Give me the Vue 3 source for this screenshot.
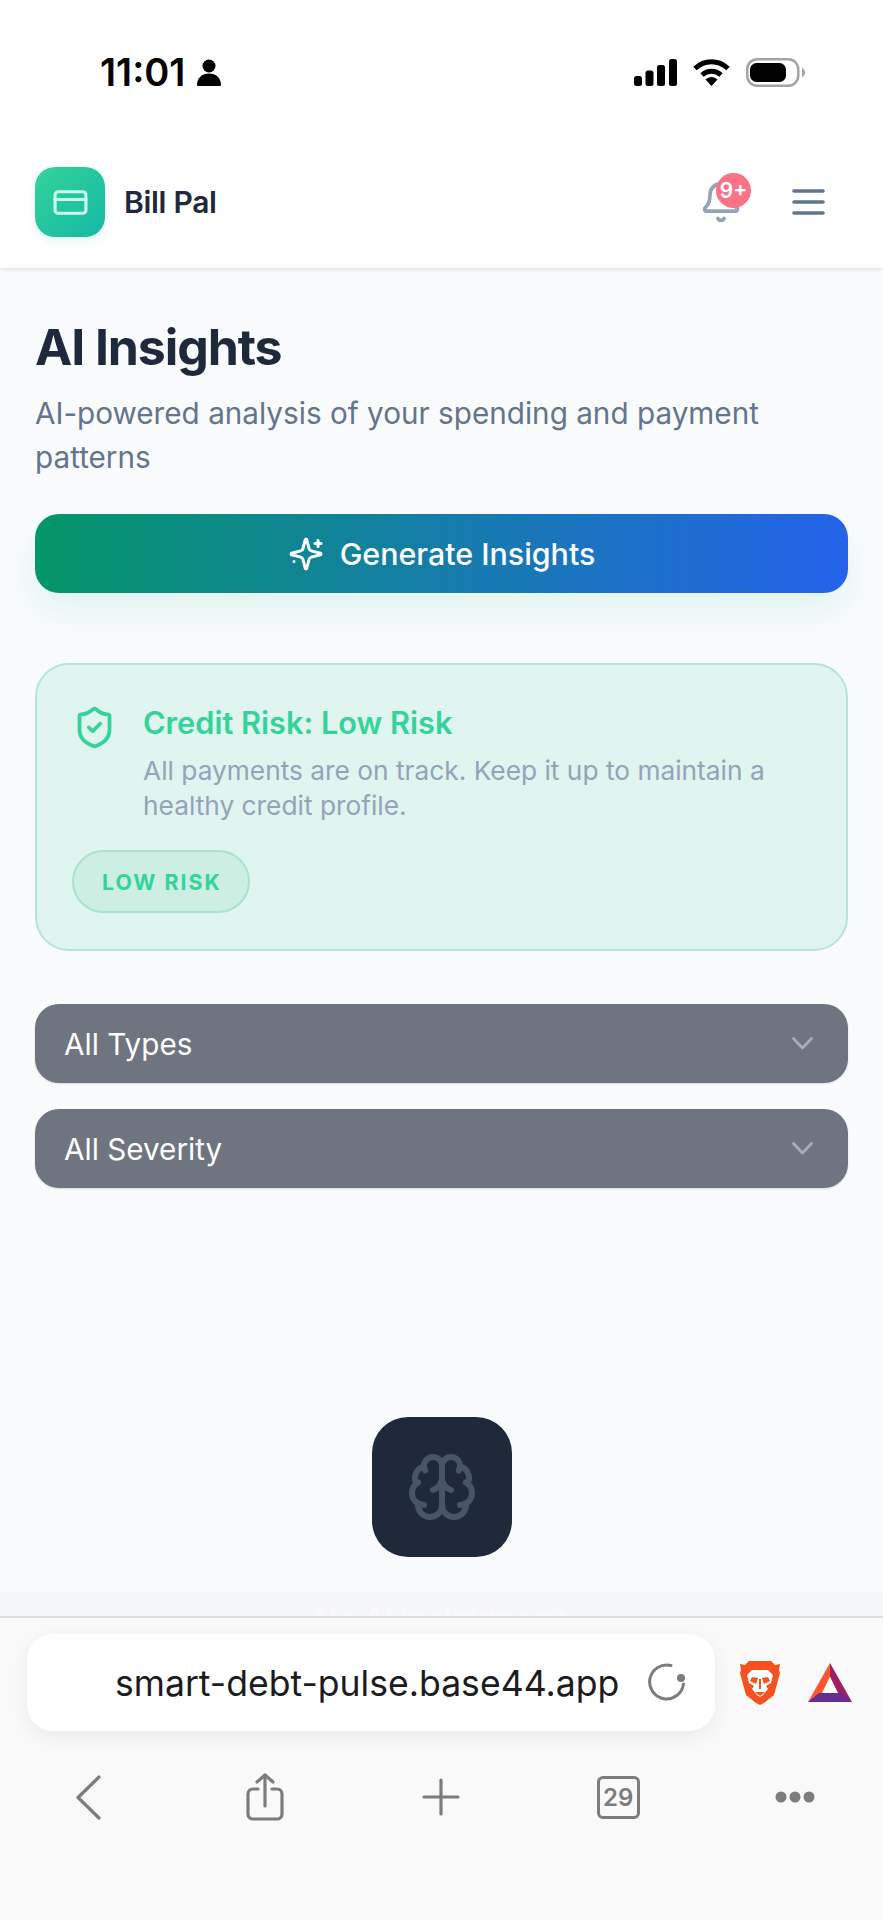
<template>
  <div class="screen">
    <div class="status">
      <div class="status-left">
        <span class="time">11:01</span>
        <svg width="24" height="27" viewBox="0 0 24 27" fill="#000">
          <circle cx="12" cy="7" r="6.5" />
          <path d="M0 26c0-7 5-11.500 12-11.500S24 19 24 26a1 1 0 0 1-1 1H1a1 1 0 0 1-1-1z" />
        </svg>
      </div>
      <div class="status-right">
        <svg width="43" height="27" viewBox="0 0 43 27" fill="#000">
          <rect x="0" y="17" width="8" height="10" rx="2.500" />
          <rect x="11.500" y="11.500" width="8" height="15.500" rx="2.500" />
          <rect x="23" y="6" width="8" height="21" rx="2.500" />
          <rect x="35" y="0" width="8" height="27" rx="2.500" />
        </svg>
        <svg width="37" height="27" viewBox="0 0 37 27" fill="none" stroke="#000" stroke-width="5">
          <path d="M2 9.500C11.500 .5 25.500 .5 35 9.500" />
          <path d="M9 16c5.500-5 13.500-5 19 0" />
          <path d="M12.500 20.500 18.500 27 24.500 20.500C21 17 16 17 12.500 20.500z" fill="#000" stroke="none" />
        </svg>
        <svg width="59" height="29" viewBox="0 0 59 29" fill="none">
          <rect x="1.250" y="1.250" width="51" height="26.500" rx="10" stroke="#a3a3a3" stroke-width="2.500" />
          <rect x="4" y="5" width="36" height="19" rx="6.500" fill="#000" />
          <path d="M56 10c2 1 3 2.500 3 4.500s-1 3.500-3 4.500z" fill="#a3a3a3" />
        </svg>
      </div>
    </div>

    <header class="topbar">
      <div class="brand">
        <div class="logo">
          <svg width="37" height="37" viewBox="0 0 24 24" fill="none" stroke="#ccfbee" stroke-width="2" stroke-linecap="round" stroke-linejoin="round">
            <rect x="2" y="5" width="20" height="14" rx="2" />
            <line x1="2" y1="10" x2="22" y2="10" />
          </svg>
        </div>
        <span class="brand-name">Bill Pal</span>
      </div>
      <div class="topbar-actions">
        <div class="bell">
          <svg width="44" height="44" viewBox="0 0 24 24" fill="none" stroke="#94a3b8" stroke-width="2" stroke-linecap="round" stroke-linejoin="round">
            <path d="M10.268 21a2 2 0 0 0 3.464 0" />
            <path d="M3.262 15.326A1 1 0 0 0 4 17h16a1 1 0 0 0 .74-1.673C19.410 13.956 18 12.499 18 8A6 6 0 0 0 6 8c0 4.499-1.411 5.956-2.738 7.326" />
          </svg>
          <span class="badge">9+</span>
        </div>
        <svg width="33" height="26" viewBox="0 0 33 26" fill="none" stroke="#64748b" stroke-width="3.600" stroke-linecap="round">
          <line x1="2" y1="2" x2="31" y2="2" />
          <line x1="2" y1="13" x2="31" y2="13" />
          <line x1="2" y1="24" x2="31" y2="24" />
        </svg>
      </div>
    </header>

    <main class="content">
      <h1>AI Insights</h1>
      <p class="subtitle">AI-powered analysis of your spending and payment patterns</p>

      <button class="generate">
        <svg width="36" height="36" viewBox="0 0 24 24" fill="none" stroke="#fff" stroke-width="2" stroke-linecap="round" stroke-linejoin="round">
          <path d="M9.937 15.500A2 2 0 0 0 8.500 14.063l-6.135-1.582a.5.5 0 0 1 0-.962L8.500 9.936A2 2 0 0 0 9.937 8.500l1.582-6.135a.5.5 0 0 1 .963 0L14.063 8.500A2 2 0 0 0 15.500 9.937l6.135 1.581a.5.5 0 0 1 0 .964L15.500 14.063a2 2 0 0 0-1.437 1.437l-1.582 6.135a.5.5 0 0 1-.963 0z" />
          <path d="M20 3v4" />
          <path d="M22 5h-4" />
          <path d="M4 17v.01" />
        </svg>
        <span>Generate Insights</span>
      </button>

      <section class="risk-card">
        <div class="risk-head">
          <svg class="shield" width="45" height="45" viewBox="0 0 24 24" fill="none" stroke="#34d399" stroke-width="2" stroke-linecap="round" stroke-linejoin="round">
            <path d="M20 13c0 5-3.500 7.500-7.660 8.950a1 1 0 0 1-.670-.010C7.500 20.500 4 18 4 13V6a1 1 0 0 1 1-1c2 0 4.500-1.200 6.240-2.720a1.170 1.170 0 0 1 1.520 0C14.510 3.810 17 5 19 5a1 1 0 0 1 1 1z" />
            <path d="m9 12 2 2 4-4" />
          </svg>
          <div>
            <h3>Credit Risk: Low Risk</h3>
            <p>All payments are on track. Keep it up to maintain a healthy credit profile.</p>
          </div>
        </div>
        <span class="risk-pill">LOW RISK</span>
      </section>

      <div v-for="filter in filters" :key="filter" class="filter">
        <span>{{ filter }}</span>
        <svg width="21" height="13" viewBox="0 0 21 13" fill="none" stroke="#a8adb6" stroke-width="2.800" stroke-linecap="round" stroke-linejoin="round">
          <path d="M1.500 1.500 10.500 11 19.500 1.500" />
        </svg>
      </div>

      <div class="brain-tile">
        <svg width="72" height="72" viewBox="0 0 24 24" fill="none" stroke="#475569" stroke-width="2" stroke-linecap="round" stroke-linejoin="round">
          <path d="M12 5a3 3 0 1 0-5.997.125 4 4 0 0 0-2.526 5.770 4 4 0 0 0 .556 6.588A4 4 0 1 0 12 18Z" />
          <path d="M12 5a3 3 0 1 1 5.997.125 4 4 0 0 1 2.526 5.770 4 4 0 0 1-.556 6.588A4 4 0 1 1 12 18Z" />
          <path d="M15 13a4.500 4.500 0 0 1-3-4 4.500 4.500 0 0 1-3 4" />
          <path d="M17.599 6.500a3 3 0 0 0 .399-1.375" />
          <path d="M6.003 5.125A3 3 0 0 0 6.401 6.500" />
          <path d="M3.477 10.896a4 4 0 0 1 .585-.396" />
          <path d="M19.938 10.500a4 4 0 0 1 .585.396" />
          <path d="M6 18a4 4 0 0 1-1.967-.516" />
          <path d="M19.967 17.484A4 4 0 0 1 18 18" />
        </svg>
      </div>
      <p class="empty-title">No AI insights yet</p>
      <div class="chrome-fade"></div>
    </main>

    <footer class="browser">
      <div class="address-row">
        <div class="address">
          <span>smart-debt-pulse.base44.app</span>
          <svg width="38" height="38" viewBox="0 0 38 38" fill="none" stroke="#7c7c7c" stroke-width="3" stroke-linecap="round">
            <path d="M23 2.500A17 17 0 1 0 35.500 21" />
            <circle cx="33" cy="15" r="4" fill="#7c7c7c" stroke="none" />
          </svg>
        </div>
        <svg class="brave" width="40" height="44" viewBox="0 0 40 44">
          <path d="M9 0h22l4 4 5-1-1 6 1 3-6 22-10 8-4 2-4-2-10-8L0 12l1-3-1-6 5 1z" fill="#f4511e" />
          <path d="M12 9h16l5 5-2 8-5 3 2 3-5 6-3 2-3-2-5-6 2-3-5-3-2-8z" fill="#fff" />
          <path d="M18 17l-6-1-2 4 6 3zM22 17l6-1 2 4-6 3zM19 18h2v10h-2zM15 31h10l-5 4z" fill="#f4511e" />
        </svg>
        <svg class="bat" width="44" height="39" viewBox="0 0 44 39">
          <path d="M22 0 0 39 14 31 22 14z" fill="#ff5630" />
          <path d="M22 0 44 39 30 31 22 14z" fill="#9e1f63" />
          <path d="M0 39h44L33 30H11z" fill="#662d91" />
          <path d="M22 14 14 30H30z" fill="#fff" />
        </svg>
      </div>

      <nav class="toolbar">
        <div class="tool">
          <svg width="25" height="45" viewBox="0 0 25 45" fill="none" stroke="#7c7c7c" stroke-width="3.200" stroke-linecap="round" stroke-linejoin="round">
            <path d="M23 2 2 22.500 23 43" />
          </svg>
        </div>
        <div class="tool">
          <svg width="38" height="48" viewBox="0 0 38 48" fill="none" stroke="#7c7c7c" stroke-width="3.200" stroke-linecap="round" stroke-linejoin="round">
            <path d="M12 16H7a5 5 0 0 0-5 5v20a5 5 0 0 0 5 5h24a5 5 0 0 0 5-5V21a5 5 0 0 0-5-5h-5" />
            <path d="M19 33V2" />
            <path d="M11 9 19 2 27 9" />
          </svg>
        </div>
        <div class="tool">
          <svg width="38" height="38" viewBox="0 0 38 38" fill="none" stroke="#7c7c7c" stroke-width="3.200" stroke-linecap="round">
            <path d="M19 2v34" />
            <path d="M2 19h34" />
          </svg>
        </div>
        <div class="tool"><span class="tabs">29</span></div>
        <div class="tool">
          <svg width="40" height="12" viewBox="0 0 40 12" fill="#7c7c7c">
            <circle cx="6" cy="6" r="5.500" />
            <circle cx="20" cy="6" r="5.500" />
            <circle cx="34" cy="6" r="5.500" />
          </svg>
        </div>
      </nav>
    </footer>
  </div>
</template>

<script setup>
const filters = ['All Types', 'All Severity']
</script>

<style>
html,
body {
  margin: 0;
  background: #f9fbfd;
}
</style>

<style scoped>
.screen {
  width: 883px;
  height: 1920px;
  display: flex;
  flex-direction: column;
  overflow: hidden;
  background: #f9fbfd;
  font-family: Inter, "Liberation Sans", sans-serif;
}

.status {
  height: 136px;
  box-sizing: border-box;
  flex-shrink: 0;
  padding: 58px 78px 0 100px;
  display: flex;
  justify-content: space-between;
  align-items: flex-start;
  background: #fff;
  position: relative;
  z-index: 1;
}

.status-left {
  display: flex;
  align-items: center;
  gap: 12px;
}

.time {
  font-size: 38px;
  line-height: 29px;
  font-weight: 600;
  color: #000;
}

.status-right {
  display: flex;
  align-items: center;
  gap: 16px;
}

.topbar {
  height: 132px;
  box-sizing: border-box;
  flex-shrink: 0;
  padding: 0 58px 0 35px;
  display: flex;
  justify-content: space-between;
  align-items: center;
  background: #fff;
  box-shadow: 0 1px 4px rgba(15, 23, 42, 0.14);
  position: relative;
}

.brand {
  display: flex;
  align-items: center;
  gap: 19px;
}

.logo {
  width: 70px;
  height: 70px;
  border-radius: 20px;
  display: flex;
  align-items: center;
  justify-content: center;
  background: linear-gradient(135deg, #34d399, #14b8a6);
  box-shadow: 0 4px 8px rgba(52, 211, 153, 0.15);
}

.brand-name {
  font-size: 30px;
  font-weight: 600;
  letter-spacing: -0.3px;
  color: #1e293b;
}

.topbar-actions {
  display: flex;
  align-items: center;
  gap: 49px;
}

.bell {
  position: relative;
  height: 44px;
}

.badge {
  position: absolute;
  left: 17px;
  top: -7px;
  width: 35px;
  height: 35px;
  border-radius: 50%;
  background: #fb7185;
  color: #fff;
  font-size: 21px;
  font-weight: 600;
  display: flex;
  align-items: center;
  justify-content: center;
}

.content {
  flex: 1;
  min-height: 0;
  position: relative;
  overflow: hidden;
  padding: 49px 35px 0;
  box-sizing: border-box;
}

h1 {
  margin: 0;
  font-size: 50px;
  line-height: 60px;
  font-weight: 700;
  letter-spacing: -1.100px;
  color: #1e293b;
}

.subtitle {
  margin: 14px 0 0;
  font-size: 29.700px;
  line-height: 44px;
  color: #64748b;
}

.generate {
  margin-top: 35px;
  width: 100%;
  height: 79px;
  border: 0;
  border-radius: 24px;
  display: flex;
  align-items: center;
  justify-content: center;
  gap: 16px;
  background: linear-gradient(90deg, #059669, #2563eb);
  box-shadow: 0 18px 36px rgba(16, 185, 129, 0.1);
  color: #fff;
  font-family: inherit;
  font-size: 30.400px;
  font-weight: 500;
}

.risk-card {
  margin-top: 70px;
  height: 288px;
  box-sizing: border-box;
  padding: 38px 35px 0;
  border: 2px solid #b4e6d7;
  border-radius: 34px;
  background: #e0f4f0;
}

.risk-head {
  display: flex;
  gap: 26px;
  align-items: flex-start;
}

.shield {
  flex-shrink: 0;
  margin-top: 2px;
}

.risk-head h3 {
  margin: 0;
  font-size: 30.700px;
  line-height: 40px;
  font-weight: 600;
  color: #34d399;
}

.risk-head p {
  margin: 10px 0 0;
  font-size: 26.300px;
  line-height: 35px;
  color: #94a3b8;
}

.risk-pill {
  display: inline-flex;
  align-items: center;
  margin-top: 27px;
  height: 63px;
  box-sizing: border-box;
  padding: 0 26px 0 28px;
  border: 2px solid #a8e2d0;
  border-radius: 32px;
  background: #cceee3;
  color: #34d399;
  font-size: 21.300px;
  font-weight: 700;
  letter-spacing: 2px;
}

.filter {
  height: 79px;
  box-sizing: border-box;
  padding: 0 35px 0 29px;
  border-radius: 24px;
  display: flex;
  align-items: center;
  justify-content: space-between;
  background: #6e7480;
  box-shadow: 0 1px 2px rgba(15, 23, 42, 0.14);
  color: #fff;
  font-size: 29.700px;
}

.risk-card + .filter {
  margin-top: 53px;
}

.filter + .filter {
  margin-top: 26px;
}

.brain-tile {
  margin: 229px auto 0;
  width: 140px;
  height: 140px;
  border-radius: 36px;
  background: #1e293b;
  display: flex;
  align-items: center;
  justify-content: center;
}

.empty-title {
  margin: 44px 0 0;
  text-align: center;
  font-size: 30px;
  line-height: 36px;
  font-weight: 600;
  color: #fff;
}

.chrome-fade {
  position: absolute;
  left: 0;
  right: 0;
  bottom: 0;
  height: 24px;
  background: rgba(240, 241, 244, 0.35);
}

.browser {
  height: 304px;
  box-sizing: border-box;
  flex-shrink: 0;
  background: #f9f9f9;
  border-top: 2px solid #dcdce2;
}

.address-row {
  height: 97px;
  margin-top: 16px;
  padding-left: 27px;
  display: flex;
  align-items: center;
}

.address {
  width: 688px;
  height: 97px;
  box-sizing: border-box;
  padding: 0 29px 0 88px;
  border-radius: 26px;
  display: flex;
  align-items: center;
  justify-content: space-between;
  background: #fff;
  box-shadow: 0 6px 18px rgba(0, 0, 0, 0.06);
  color: #1c1c1e;
  font-size: 35.600px;
}

.address span {
  margin-top: 2px;
}

.address svg {
  margin-top: -2px;
}

.brave {
  margin: 0 0 0 25px;
}

.bat {
  margin-left: 28px;
}

.toolbar {
  margin-top: 41px;
  height: 50px;
  display: grid;
  grid-template-columns: repeat(5, 1fr);
}

.tool {
  display: flex;
  align-items: center;
  justify-content: center;
}

.tabs {
  width: 43px;
  height: 43px;
  box-sizing: border-box;
  border: 3.500px solid #7c7c7c;
  border-radius: 6px;
  display: flex;
  align-items: center;
  justify-content: center;
  color: #7c7c7c;
  font-size: 24px;
  font-weight: 600;
}
</style>
